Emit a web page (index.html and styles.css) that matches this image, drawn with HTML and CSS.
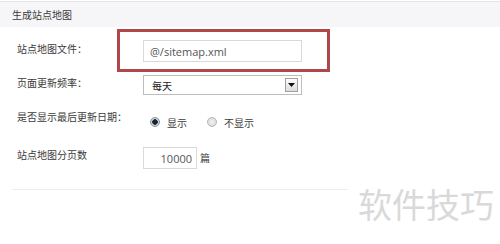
FILE: index.html
```html
<!DOCTYPE html>
<html lang="zh-CN">
<head>
    <meta charset="UTF-8">
    <meta name="viewport" content="width=device-width, initial-scale=1.0">
    <title>生成站点地图</title>
    <link rel="stylesheet" href="styles.css">
</head>
<body>
    <div class="panel">
        <div class="panel-title">生成站点地图</div>
        <div class="form">
            <div class="form-row row-file">
                <label class="form-label">站点地图文件：</label>
                <input class="text-input file-input" type="text" value="@/sitemap.xml">
            </div>
            <div class="form-row row-freq">
                <label class="form-label">页面更新频率：</label>
                <div class="select">
                    <span class="select-value">每天</span>
                    <span class="select-arrow">
                        <svg width="7" height="4" viewBox="0 0 7 4"><path d="M0 0h7L3.5 4z" fill="#111"/></svg>
                    </span>
                </div>
            </div>
            <div class="form-row row-date">
                <label class="form-label">是否显示最后更新日期：</label>
                <div class="radios">
                    <span class="radio checked"></span><span class="radio-text">显示</span>
                    <span class="radio"></span><span class="radio-text">不显示</span>
                </div>
            </div>
            <div class="form-row row-pages">
                <label class="form-label">站点地图分页数</label>
                <input class="text-input page-input" type="text" value="10000">
                <span class="unit">篇</span>
            </div>
        </div>
        <div class="divider"></div>
    </div>

    <div class="highlight"></div>
    <div class="watermark">软件技巧</div>
</body>
</html>
```

FILE: styles.css
```css
body{
    margin: 0;
    padding-top: 1px;
    background-color: #fff;
    font-family: "Noto Sans CJK SC", sans-serif;
    color: #3a3a3a;
}
.panel-title{
    height: 25px;
    line-height: 25px;
    padding-left: 12px;
    border-top: 1px solid #e4e4e6;
    background-color: #f6f6f8;
    font-size: 10px;
}
.form{
    padding-left: 17px;
    margin-top: 13px;
}
.form-row{
    display: flex;
    align-items: flex-start;
}
.form-label{
    width: 126px;
    padding-top: 2px;
    line-height: 14px;
    font-family: "Noto Sans CJK TC", sans-serif;
    font-size: 10px;
}
.row-freq,
.row-date{
    margin-top: 13px;
}
.row-pages{
    margin-top: 18px;
}
.row-freq .form-label,
.row-pages .form-label{
    padding-top: 1px;
}
.text-input{
    box-sizing: border-box;
    height: 22px;
    margin: 0;
    border: 1px solid #d9d9d9;
    font-family: "Open Sans", "Noto Sans CJK SC", sans-serif;
    font-size: 11px;
    color: #555;
    outline: none;
}
.file-input{
    width: 159px;
    padding: 0 6px;
}
.page-input{
    width: 54px;
    padding: 0 4px;
    text-align: right;
}
.unit{
    margin-left: 3px;
    line-height: 22px;
    font-size: 10px;
}
.select{
    box-sizing: border-box;
    width: 159px;
    height: 20px;
    display: flex;
    align-items: center;
    justify-content: space-between;
    padding: 0 3px 0 8px;
    border: 1px solid #bdbdbd;
    font-size: 10px;
    color: #222;
}
.select-arrow{
    box-sizing: border-box;
    width: 13px;
    height: 14px;
    display: flex;
    align-items: center;
    justify-content: center;
    border: 1px solid #a0a0a0;
    background: linear-gradient(#fdfdfd, #dcdcdc);
}
.radios{
    display: flex;
    align-items: center;
    height: 14px;
    margin-top: 7px;
    padding-left: 7px;
    font-size: 10px;
}
.radio{
    box-sizing: border-box;
    width: 10px;
    height: 10px;
    border-radius: 50%;
    border: 1px solid #b5b5b5;
    background: radial-gradient(#f2f2f2, #d4d4d4);
}
.radio.checked{
    border-color: #8a94a0;
    background: radial-gradient(circle, #1c2430 0 2.5px, #c9d2dc 3px);
}
.radio-text{
    margin-left: 7px;
    margin-right: 20px;
}
.divider{
    width: 336px;
    margin: 20px 0 0 12px;
    border-top: 1px solid #ededed;
}
.highlight{
    position: absolute;
    left: 117px;
    top: 29px;
    width: 213px;
    height: 43px;
    box-sizing: border-box;
    border: 3px solid #b04749;
}
.watermark{
    position: absolute;
    left: 358px;
    top: 187px;
    font-size: 34px;
    line-height: 34px;
    color: #d9d9d9;
}
```
